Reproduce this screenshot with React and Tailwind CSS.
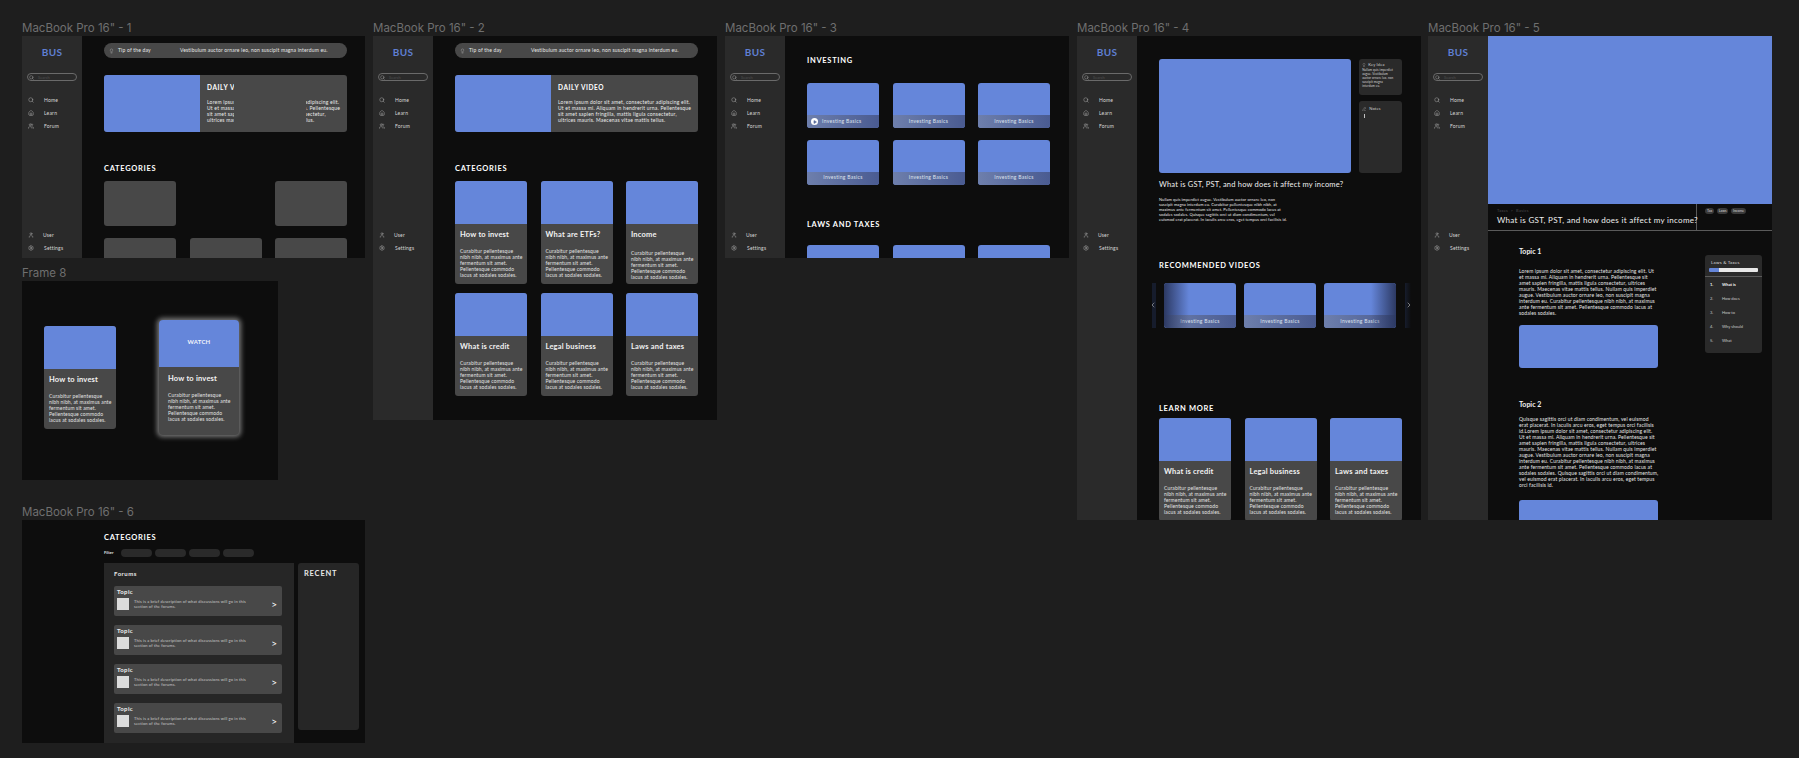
import { Search, House, Users, User, Settings, Lightbulb, Play, ChevronLeft, ChevronRight, PencilLine } from 'lucide-react'

const lorem = ['Curabitur pellentesque', 'nibh nibh, at maximus ante', 'fermentum sit amet.', 'Pellentesque commodo', 'lacus at sodales sodales.']
const daily = [
  'Lorem ipsum dolor sit amet, consectetur adipiscing elit.',
  'Ut et massa mi. Aliquam in hendrerit urna. Pellentesque',
  'sit amet sapien fringilla, mattis ligula consectetur,',
  'ultrices mauris. Maecenas vitae mattis tellus.',
]
const topicOne = [
  'Lorem ipsum dolor sit amet, consectetur adipiscing elit. Ut',
  'et massa mi. Aliquam in hendrerit urna. Pellentesque sit',
  'amet sapien fringilla, mattis ligula consectetur, ultrices',
  'mauris. Maecenas vitae mattis tellus. Nullam quis imperdiet',
  'augue. Vestibulum auctor ornare leo, non suscipit magna',
  'interdum eu. Curabitur pellentesque nibh nibh, at maximus',
  'ante fermentum sit amet. Pellentesque commodo lacus at',
  'sodales sodales.',
]
const topicTwo = [
  'Quisque sagittis orci ut diam condimentum, vel euismod',
  'erat placerat. In iaculis arcu eros, eget tempus orci facilisis',
  'id.Lorem ipsum dolor sit amet, consectetur adipiscing elit.',
  'Ut et massa mi. Aliquam in hendrerit urna. Pellentesque sit',
  'amet sapien fringilla, mattis ligula consectetur, ultrices',
  'mauris. Maecenas vitae mattis tellus. Nullam quis imperdiet',
  'augue. Vestibulum auctor ornare leo, non suscipit magna',
  'interdum eu. Curabitur pellentesque nibh nibh, at maximus',
  'ante fermentum sit amet. Pellentesque commodo lacus at',
  'sodales sodales. Quisque sagittis orci ut diam condimentum,',
  'vel euismod erat placerat. In iaculis arcu eros, eget tempus',
  'orci facilisis id.',
]
const videoText = [
  'Nullam quis imperdiet augue. Vestibulum auctor ornare leo, non',
  'suscipit magna interdum eu. Curabitur pellentesque nibh nibh, at',
  'maximus ante fermentum sit amet. Pellentesque commodo lacus at',
  'sodales sodales. Quisque sagittis orci ut diam condimentum, vel',
  'euismod erat placerat. In iaculis arcu eros, eget tempus orci facilisis id.',
]
const categories = ['How to invest', 'What are ETFs?', 'Income', 'What is credit', 'Legal business', 'Laws and taxes']
const chapters = ['What is', 'How does', 'How to', 'Why should', 'What']

function Lines({ lines, className }) {
  return (
    <div className={className}>
      {lines.map((line) => (
        <div key={line} className="whitespace-nowrap">{line}</div>
      ))}
    </div>
  )
}

function Frame({ label, position, size, children }) {
  return (
    <section className={`absolute ${position}`}>
      <div className="absolute -top-[15px] left-0 whitespace-nowrap font-[Inter,sans-serif] text-[11.5px] leading-[14px] text-[#6f6f6f]">{label}</div>
      <div className={`flex overflow-hidden bg-[#0d0d0d] font-[Lato,sans-serif] text-white ${size}`}>{children}</div>
    </section>
  )
}

function NavRow({ icon: Icon, label, gap = 'gap-[10px]' }) {
  return (
    <div className={`flex h-[8px] items-center pl-[6px] ${gap}`}>
      <Icon className="h-[6px] w-[6px] shrink-0 text-[#c4c4c4]" strokeWidth={1.6} />
      <span className="text-[5px] leading-[6px] tracking-[0.2px] text-[#d8d8d8]">{label}</span>
    </div>
  )
}

function Sidebar() {
  return (
    <aside className="w-[60px] shrink-0 self-stretch bg-[#2a2a2a]">
      <div className="flex h-[222px] flex-col justify-between pb-[6px]">
        <div>
          <div className="pt-[10px] text-center text-[10px] leading-[12px] font-bold tracking-[0.4px] text-[#5f7fd2]">BUS</div>
          <div className="mx-[5px] mt-[15px] flex h-[8px] items-center gap-[4px] rounded-full border border-[#6a6a6a] pl-[1px]">
            <Search className="h-[5px] w-[5px] text-[#c4c4c4]" strokeWidth={1.6} />
            <span className="text-[4px] leading-[5px] text-[#505050]">Search</span>
          </div>
          <div className="mt-[15px] flex flex-col gap-[5px]">
            <NavRow icon={Search} label="Home" />
            <NavRow icon={House} label="Learn" />
            <NavRow icon={Users} label="Forum" />
          </div>
        </div>
        <div className="flex flex-col gap-[5px]">
          <NavRow icon={User} label="User" gap="gap-[9px]" />
          <NavRow icon={Settings} label="Settings" />
        </div>
      </div>
    </aside>
  )
}

function Heading({ children, className = '' }) {
  return <h2 className={`h-[8px] whitespace-nowrap text-[7.5px] leading-[10px] font-bold tracking-[0.7px] ${className}`}>{children}</h2>
}

function CategoryCard({ title, lower }) {
  return (
    <article className="h-[103px] w-[72px] overflow-hidden rounded-[3px] bg-[#484848]">
      <div className="h-[43px] bg-[#6586da]" />
      <div className="px-[5px] pt-[7px]">
        <h3 className="whitespace-nowrap text-[7.5px] leading-[8px] font-bold tracking-[0.2px] text-[#f2f2f2]">{title}</h3>
        <Lines lines={lorem} className={`${lower ? 'mt-[11px]' : 'mt-[9px]'} text-[5px] leading-[6px] tracking-[0.15px] text-[#e4e4e4]`} />
      </div>
    </article>
  )
}

function VideoThumb({ play, fade }) {
  return (
    <div className="relative h-[45px] w-[72px] overflow-hidden rounded-[3px] bg-[#6586da]">
      <div className={`absolute inset-x-0 bottom-0 flex h-[13px] items-center bg-gradient-to-r from-[#6e7fac] to-[#4a5b91] text-[5px] tracking-[0.3px] text-[#dfe3ee] ${play ? 'gap-[4px] pl-[4px]' : 'justify-center'}`}>
        {play && (
          <span className="flex h-[7px] w-[7px] items-center justify-center rounded-full bg-white">
            <Play className="h-[4px] w-[4px] fill-[#5d6f9f] text-[#5d6f9f]" />
          </span>
        )}
        Investing Basics
      </div>
      {fade === 'left' && <div className="absolute inset-y-0 left-0 w-[25px] bg-gradient-to-r from-[#2c3963] to-transparent" />}
      {fade === 'right' && <div className="absolute inset-y-0 right-0 w-[25px] bg-gradient-to-l from-[#2c3963] to-transparent" />}
    </div>
  )
}

function TipBar() {
  return (
    <div className="relative flex h-[15px] items-center rounded-full bg-[#484848] pl-[5px] text-[5px] tracking-[0.18px] text-[#e8e8e8]">
      <Lightbulb className="h-[6px] w-[5px] text-[#d0d0d0]" strokeWidth={1.5} />
      <span className="ml-[4px] w-[64px] whitespace-nowrap">Tip of the day</span>
      <span className="-ml-[2px] whitespace-nowrap">Vestibulum auctor ornare leo, non suscipit magna interdum eu.</span>
    </div>
  )
}

function DailyVideo({ masked }) {
  return (
    <div className="relative mt-[17px] flex h-[57px] overflow-hidden rounded-[3px] bg-[#484848]">
      <div className="w-[96px] shrink-0 bg-[#6586da]" />
      <div className="pl-[7px] pt-[8px]">
        <h2 className="h-[8px] whitespace-nowrap text-[6.5px] leading-[10px] font-bold tracking-[0.6px]">DAILY VIDEO</h2>
        <Lines lines={daily} className="mt-[8px] text-[5px] leading-[6px] tracking-[0.22px] text-[#ececec]" />
      </div>
      {masked && <div className="absolute inset-y-0 left-[130px] w-[72px] bg-[#484848]" />}
    </div>
  )
}

function ForumItem() {
  return (
    <div className="flex h-[30px] rounded-[2px] bg-[#484848] pl-[3px] pr-[5px]">
      <div className="flex-1 pt-[2px]">
        <h4 className="text-[6px] leading-[8px] font-bold tracking-[0.4px] text-[#ededed]">Topic</h4>
        <div className="mt-[2px] flex gap-[5px]">
          <div className="h-[12px] w-[12px] bg-[#dcdcdc]" />
          <Lines
            lines={['This is a brief description of what discussions will go in this', 'section of the forums.']}
            className="pt-[1px] text-[4px] leading-[5px] tracking-[0.15px] text-[#c9c9c9]"
          />
        </div>
      </div>
      <span className="self-center pt-[6px] text-[10px] leading-[10px] text-white">&gt;</span>
    </div>
  )
}

export default function App() {
  return (
    <div className="relative h-[758px] w-[1799px] overflow-hidden bg-[#1e1e1e]">
      <Frame label={'MacBook Pro 16" - 1'} position="left-[22px] top-[36px]" size="h-[222px] w-[343px]">
        <Sidebar />
        <main className="ml-[22px] w-[243px] pt-[7px]">
          <TipBar />
          <DailyVideo masked />
          <Heading className="mt-[32px]">CATEGORIES</Heading>
          <div className="mt-[9px] grid grid-cols-3 gap-x-[13.5px] gap-y-[12px]">
            {[true, false, true, true, true, true].map((show, i) => (
              <div key={i} className={`h-[45px] rounded-[3px] bg-[#484848] ${show ? '' : 'invisible'}`} />
            ))}
          </div>
        </main>
      </Frame>

      <Frame label={'MacBook Pro 16" - 2'} position="left-[373px] top-[36px]" size="h-[384px] w-[344px]">
        <Sidebar />
        <main className="ml-[22px] w-[243px] pt-[7px]">
          <TipBar />
          <DailyVideo />
          <Heading className="mt-[32px]">CATEGORIES</Heading>
          <div className="mt-[9px] grid grid-cols-3 gap-x-[13.5px] gap-y-[9px]">
            {categories.map((title) => (
              <CategoryCard key={title} title={title} lower={title === 'Income'} />
            ))}
          </div>
        </main>
      </Frame>

      <Frame label={'MacBook Pro 16" - 3'} position="left-[725px] top-[36px]" size="h-[222px] w-[344px]">
        <Sidebar />
        <main className="ml-[22px] w-[243px] pt-[20px]">
          <Heading>INVESTING</Heading>
          <div className="mt-[19px] grid grid-cols-3 gap-x-[13.5px] gap-y-[11.5px]">
            {[0, 1, 2, 3, 4, 5].map((i) => (
              <VideoThumb key={i} play={i === 0} />
            ))}
          </div>
          <Heading className="mt-[35px]">LAWS AND TAXES</Heading>
          <div className="mt-[17px] grid grid-cols-3 gap-x-[13.5px]">
            {[0, 1, 2].map((i) => (
              <div key={i} className="h-[45px] w-[72px] rounded-[3px] bg-[#6586da]" />
            ))}
          </div>
        </main>
      </Frame>

      <Frame label={'MacBook Pro 16" - 4'} position="left-[1077px] top-[36px]" size="h-[484px] w-[344px]">
        <Sidebar />
        <main className="ml-[22px] w-[243px] pt-[23px]">
          <div className="flex gap-[8px]">
            <div className="h-[114px] w-[193px] rounded-[3px] bg-[#6586da]" />
            <div className="flex w-[43px] flex-col gap-[6px]">
              <div className="h-[36px] rounded-[3px] bg-[#2a2a2a] px-[3px] pt-[3px]">
                <div className="flex items-center gap-[2px] text-[4px] leading-[5px] tracking-[0.2px] text-[#d0d0d0]">
                  <Lightbulb className="h-[4px] w-[4px]" strokeWidth={1.5} />
                  Key Idea
                </div>
                <Lines
                  lines={['Nullam quis imperdiet', 'augue. Vestibulum', 'auctor ornare leo, non', 'suscipit magna', 'interdum eu.']}
                  className="mt-[1px] text-[3px] leading-[4px] tracking-[0.1px] text-[#d8d8d8]"
                />
              </div>
              <div className="flex-1 rounded-[3px] bg-[#2a2a2a] px-[3px] pt-[5px]">
                <div className="flex items-center gap-[3px] text-[4px] leading-[5px] tracking-[0.2px] text-[#d0d0d0]">
                  <PencilLine className="h-[4px] w-[4px]" strokeWidth={1.5} />
                  Notes
                </div>
                <div className="ml-[2px] mt-[3px] h-[4px] w-px bg-[#c0c0c0]" />
              </div>
            </div>
          </div>
          <h1 className="mt-[7px] whitespace-nowrap text-[7.5px] leading-[10px] font-normal tracking-[0.2px] text-[#f0f0f0]">What is GST, PST, and how does it affect my income?</h1>
          <Lines lines={videoText} className="mt-[7px] text-[4px] leading-[5.1px] tracking-[0.08px] text-[#e8e8e8]" />
          <Heading className="mt-[39px]">RECOMMENDED VIDEOS</Heading>
          <div className="-ml-[7px] mt-[14px] flex w-[270px] gap-[8px]">
            <div className="relative h-[45px] w-[4px] bg-[#161c2c]">
              <ChevronLeft className="absolute left-[-3px] top-[18px] h-[8px] w-[8px] text-[#d0d0d0]" strokeWidth={1.5} />
            </div>
            <VideoThumb fade="left" />
            <VideoThumb />
            <VideoThumb fade="right" />
            <div className="relative ml-px h-[45px] w-[6px] bg-gradient-to-r from-[#161c2c] to-transparent">
              <ChevronRight className="absolute left-0 top-[18px] h-[8px] w-[8px] text-[#e0e0e0]" strokeWidth={1.5} />
            </div>
          </div>
          <Heading className="mt-[76px]">LEARN MORE</Heading>
          <div className="mt-[6px] grid grid-cols-3 gap-x-[13.5px]">
            {categories.slice(3).map((title) => (
              <CategoryCard key={title} title={title} />
            ))}
          </div>
        </main>
      </Frame>

      <Frame label={'MacBook Pro 16" - 5'} position="left-[1428px] top-[36px]" size="h-[484px] w-[344px]">
        <Sidebar />
        <main className="min-w-0 flex-1">
          <div className="h-[168px] bg-[#6586da]" />
          <div className="flex h-[27px] border-b border-[#5a5a5a]">
            <div className="w-[209px] border-r border-[#5a5a5a] pl-[9px] pt-[4px]">
              <div className="text-[4px] leading-[5px] tracking-[0.3px] text-[#4c4c4c]">Taxes &nbsp;&gt;&nbsp; Basics</div>
              <h1 className="mt-[1px] whitespace-nowrap text-[8px] leading-[12px] font-normal tracking-[0.3px] text-[#f0f0f0]">What is GST, PST, and how does it affect my income?</h1>
            </div>
            <div className="flex items-start gap-[2.5px] pl-[8px] pt-[3.5px]">
              {['Tax', 'Laws', 'Income'].map((tag) => (
                <span key={tag} className="rounded-full bg-[#3a3a3a] px-[2px] text-[3.5px] leading-[6px] text-[#d8d8d8]">{tag}</span>
              ))}
            </div>
          </div>
          <div className="flex pl-[31px]">
            <div className="w-[139px] shrink-0 pt-[16px]">
              <h3 className="text-[7px] leading-[8px] font-bold text-[#f2f2f2]">Topic 1</h3>
              <Lines lines={topicOne} className="mt-[13px] text-[5px] leading-[6px] tracking-[0.14px] text-[#e8e8e8]" />
              <div className="mt-[9px] h-[43px] rounded-[3px] bg-[#6586da]" />
              <h3 className="mt-[32px] text-[7px] leading-[8px] font-bold text-[#f2f2f2]">Topic 2</h3>
              <Lines lines={topicTwo} className="mt-[8px] text-[5px] leading-[6px] tracking-[0.14px] text-[#e8e8e8]" />
              <div className="mt-[12px] h-[43px] rounded-[3px] bg-[#6586da]" />
            </div>
            <aside className="ml-[47px] mt-[24px] h-[98px] w-[57px] shrink-0 rounded-[3px] bg-[#2a2a2a]">
              <div className="px-[6px] pt-[5px] text-[4.5px] leading-[6px] tracking-[0.2px] text-[#d8d8d8]">Laws &amp; Taxes</div>
              <div className="mx-[4px] mt-[2px] h-[4px] rounded-[1px] bg-gradient-to-r from-[#6586da] from-20% to-[#e8e8e8] to-20%" />
              <div className="mt-[4px] border-t border-[#5a5a5a] pt-[5px]">
                {chapters.map((chapter, i) => (
                  <div key={chapter} className={`flex h-[14px] pl-[5px] text-[4px] leading-[6px] text-[#c8c8c8] ${i === 0 ? 'font-bold text-white' : ''}`}>
                    <span className="w-[12px]">{i + 1}.</span>
                    {chapter}
                  </div>
                ))}
              </div>
            </aside>
          </div>
        </main>
      </Frame>

      <Frame label="Frame 8" position="left-[22px] top-[281px]" size="h-[199px] w-[256px]">
        <div className="ml-[22px] flex gap-[43px]">
          <div className="mt-[45px]">
            <CategoryCard title="How to invest" />
          </div>
          <article className="mt-[39px] h-[115px] w-[80px] overflow-hidden rounded-[4px] bg-[#484848] shadow-[0_0_5px_1.5px_rgba(255,255,255,0.45)]">
            <div className="flex h-[47px] items-center justify-center bg-[#6586da] pb-[4px] text-[6px] font-bold tracking-[0.2px] text-[#f2f4fb]">WATCH</div>
            <div className="px-[9px] pt-[8px]">
              <h3 className="whitespace-nowrap text-[7.5px] leading-[8px] font-bold tracking-[0.2px] text-[#f2f2f2]">How to invest</h3>
              <Lines lines={lorem} className="mt-[9px] text-[5px] leading-[6px] tracking-[0.15px] text-[#e4e4e4]" />
            </div>
          </article>
        </div>
      </Frame>

      <Frame label={'MacBook Pro 16" - 6'} position="left-[22px] top-[520px]" size="h-[223px] w-[343px]">
        <main className="ml-[82px] pt-[13px]">
          <Heading>CATEGORIES</Heading>
          <div className="mt-[8px] flex h-[8px] items-center">
            <span className="w-[17px] text-[4px] font-bold text-[#e0e0e0]">Filter</span>
            <div className="flex gap-[3px]">
              {[0, 1, 2, 3].map((i) => (
                <div key={i} className="h-[8px] w-[31px] rounded-full bg-[#2a2a2a]" />
              ))}
            </div>
          </div>
          <div className="mt-[6px] flex items-start gap-[4px]">
            <div className="h-[180px] w-[190px] bg-[#262626] pl-[10px] pr-[12px] pt-[6px]">
              <h3 className="text-[6px] leading-[9px] h-[8px] font-bold tracking-[0.5px] text-[#e8e8e8]">Forums</h3>
              <div className="mt-[9px] flex flex-col gap-[9px]">
                {[0, 1, 2, 3].map((i) => (
                  <ForumItem key={i} />
                ))}
              </div>
            </div>
            <div className="h-[167px] w-[61px] rounded-[3px] bg-[#262626] pl-[6px] pt-[6px]">
              <Heading className="tracking-[0.8px] text-[#e8e8e8]">RECENT</Heading>
            </div>
          </div>
        </main>
      </Frame>
    </div>
  )
}
